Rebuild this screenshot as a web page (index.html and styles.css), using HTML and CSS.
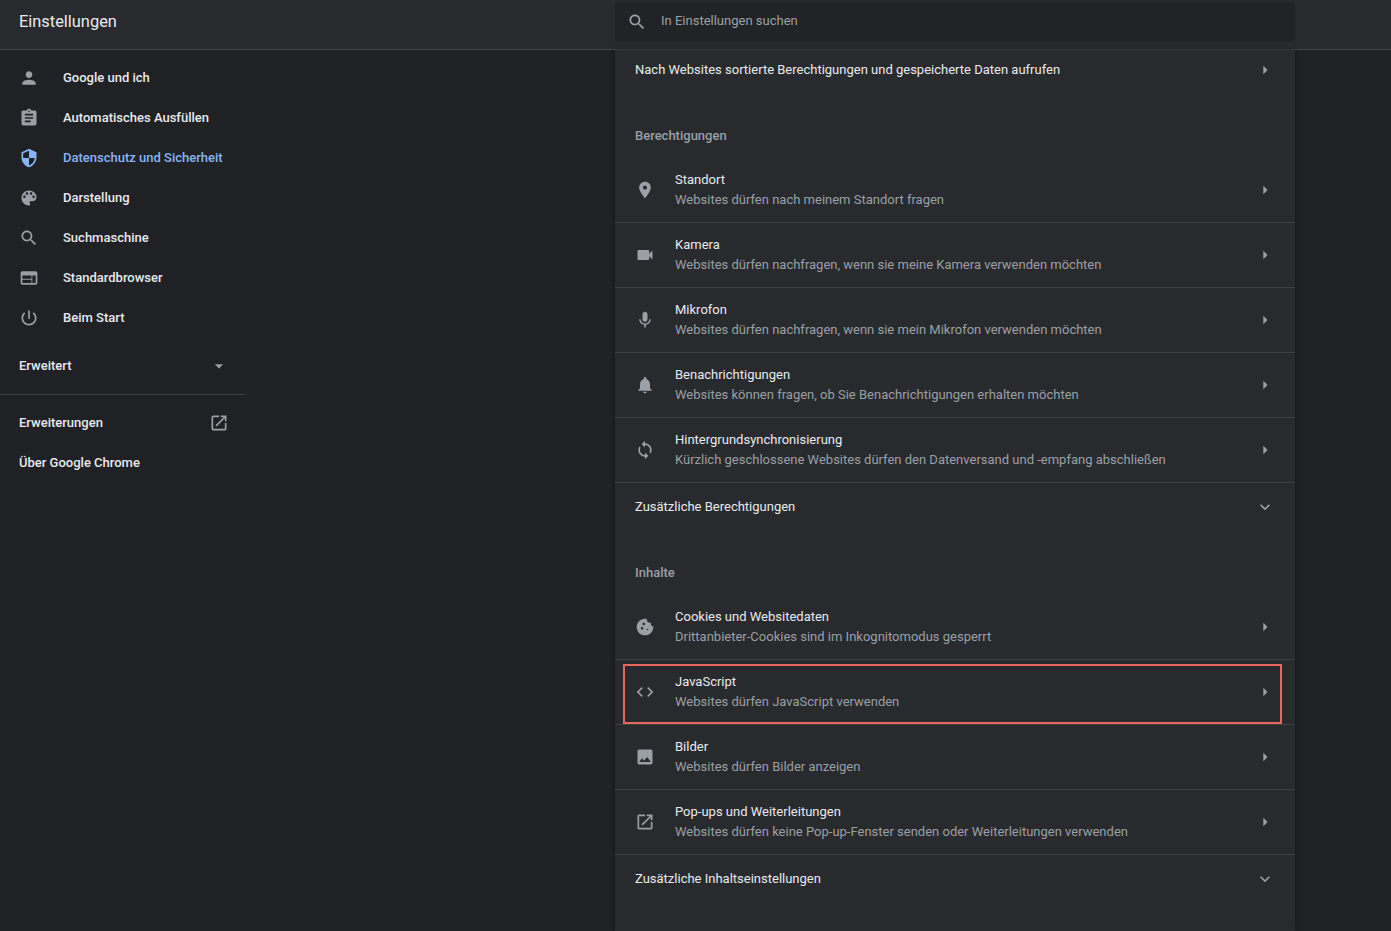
FILE: index.html
```html
<!DOCTYPE html>
<html lang="de">

<head>
  <meta charset="UTF-8">
  <meta name="viewport" content="width=device-width, initial-scale=1.0">
  <title>Einstellungen</title>
  <link rel="stylesheet" href="styles.css">
</head>

<body>
  <svg class="sprite" xmlns="http://www.w3.org/2000/svg">
    <symbol id="i-person" viewBox="0 0 24 24"><path d="M12 12c2.21 0 4-1.79 4-4s-1.79-4-4-4-4 1.79-4 4 1.79 4 4 4zm0 2c-2.67 0-8 1.34-8 4v2h16v-2c0-2.66-5.33-4-8-4z"/></symbol>
    <symbol id="i-assignment" viewBox="0 0 24 24"><path d="M19 3h-4.18C14.4 1.84 13.3 1 12 1c-1.3 0-2.4.84-2.82 2H5c-1.1 0-2 .9-2 2v14c0 1.1.9 2 2 2h14c1.1 0 2-.9 2-2V5c0-1.1-.9-2-2-2zm-7 0c.55 0 1 .45 1 1s-.45 1-1 1-1-.45-1-1 .45-1 1-1zm2 14H7v-2h7v2zm3-4H7v-2h10v2zm0-4H7V7h10v2z"/></symbol>
    <symbol id="i-security" viewBox="0 0 24 24"><path d="M12 1L3 5v6c0 5.55 3.84 10.74 9 12 5.16-1.26 9-6.45 9-12V5l-9-4zm0 10.99h7c-.53 4.12-3.28 7.79-7 8.94V12H5V6.3l7-3.11v8.8z"/></symbol>
    <symbol id="i-palette" viewBox="0 0 24 24"><path d="M12 3c-4.97 0-9 4.03-9 9s4.03 9 9 9c.83 0 1.5-.67 1.5-1.5 0-.39-.15-.74-.39-1.01-.23-.26-.38-.61-.38-.99 0-.83.67-1.5 1.5-1.5H16c2.76 0 5-2.24 5-5 0-4.42-4.03-8-9-8zm-5.5 9c-.83 0-1.5-.67-1.5-1.5S5.67 9 6.5 9 8 9.67 8 10.5 7.33 12 6.5 12zm3-4C8.67 8 8 7.33 8 6.5S8.67 5 9.5 5s1.5.67 1.5 1.5S10.33 8 9.5 8zm5 0c-.83 0-1.5-.67-1.5-1.5S13.67 5 14.5 5s1.5.67 1.5 1.5S15.33 8 14.5 8zm3 4c-.83 0-1.5-.67-1.5-1.5S16.67 9 17.5 9s1.5.67 1.5 1.5-.67 1.5-1.5 1.5z"/></symbol>
    <symbol id="i-search" viewBox="0 0 24 24"><path d="M15.5 14h-.79l-.28-.27C15.41 12.59 16 11.11 16 9.5 16 5.91 13.09 3 9.5 3S3 5.91 3 9.5 5.91 16 9.5 16c1.61 0 3.09-.59 4.23-1.57l.27.28v.79l5 4.99L20.49 19l-4.99-5zm-6 0C7.01 14 5 11.99 5 9.5S7.01 5 9.5 5 14 7.01 14 9.5 11.99 14 9.5 14z"/></symbol>
    <symbol id="i-web" viewBox="0 0 24 24"><path d="M20 4H4c-1.1 0-1.99.9-1.99 2L2 18c0 1.1.9 2 2 2h16c1.1 0 2-.9 2-2V6c0-1.1-.9-2-2-2zm-5 14H4v-4h11v4zm0-5H4V9h11v4zm5 5h-4V9h4v9z"/></symbol>
    <symbol id="i-power" viewBox="0 0 24 24"><path d="M13 3h-2v10h2V3zm4.83 2.17l-1.42 1.42C17.99 7.86 19 9.81 19 12c0 3.87-3.13 7-7 7s-7-3.13-7-7c0-2.19 1.01-4.14 2.58-5.42L6.17 5.17C4.23 6.82 3 9.26 3 12c0 4.97 4.03 9 9 9s9-4.03 9-9c0-2.74-1.23-5.18-3.17-6.83z"/></symbol>
    <symbol id="i-drop" viewBox="0 0 24 24"><path d="M7 10l5 5 5-5z"/></symbol>
    <symbol id="i-open" viewBox="0 0 24 24"><path d="M19 19H5V5h7V3H5c-1.11 0-2 .9-2 2v14c0 1.1.89 2 2 2h14c1.1 0 2-.9 2-2v-7h-2v7zM14 3v2h3.59l-9.83 9.83 1.41 1.41L19 6.41V10h2V3h-7z"/></symbol>
    <symbol id="i-arrow" viewBox="0 0 24 24"><path d="M10 7l5 5-5 5z"/></symbol>
    <symbol id="i-more" viewBox="0 0 24 24"><path d="M16.59 8.59L12 13.17 7.41 8.59 6 10l6 6 6-6z"/></symbol>
    <symbol id="i-pin" viewBox="0 0 24 24"><path d="M12 2C8.13 2 5 5.13 5 9c0 5.25 7 13 7 13s7-7.75 7-13c0-3.87-3.13-7-7-7zm0 9.5c-1.38 0-2.5-1.12-2.5-2.5s1.12-2.5 2.5-2.5 2.5 1.12 2.5 2.5-1.12 2.5-2.5 2.5z"/></symbol>
    <symbol id="i-cam" viewBox="0 0 24 24"><path d="M17 10.5V7c0-.55-.45-1-1-1H4c-.55 0-1 .45-1 1v10c0 .55.45 1 1 1h12c.55 0 1-.45 1-1v-3.5l4 4v-11l-4 4z"/></symbol>
    <symbol id="i-mic" viewBox="0 0 24 24"><path d="M12 14c1.66 0 3-1.34 3-3V5c0-1.66-1.34-3-3-3S9 3.34 9 5v6c0 1.66 1.34 3 3 3zm5.3-3c0 3-2.54 5.1-5.3 5.1S6.7 14 6.7 11H5c0 3.41 2.72 6.23 6 6.72V21h2v-3.28c3.28-.48 6-3.3 6-6.72h-1.7z"/></symbol>
    <symbol id="i-bell" viewBox="0 0 24 24"><path d="M12 22c1.1 0 2-.9 2-2h-4c0 1.1.89 2 2 2zm6-6v-5c0-3.07-1.64-5.64-4.5-6.32V4c0-.83-.67-1.5-1.5-1.5s-1.5.67-1.5 1.5v.68C7.63 5.36 6 7.92 6 11v5l-2 2v1h16v-1l-2-2z"/></symbol>
    <symbol id="i-sync" viewBox="0 0 24 24"><path d="M12 4V1L8 5l4 4V6c3.31 0 6 2.69 6 6 0 1.01-.25 1.97-.7 2.8l1.46 1.46C19.54 15.03 20 13.57 20 12c0-4.42-3.58-8-8-8zm0 14c-3.31 0-6-2.69-6-6 0-1.01.25-1.97.7-2.8L5.24 7.74C4.46 8.97 4 10.43 4 12c0 4.42 3.58 8 8 8v3l4-4-4-4v3z"/></symbol>
    <symbol id="i-cookie" viewBox="0 0 24 24"><path d="M21.95 10.99c-1.79-.03-3.7-1.95-2.68-4.22-2.97 1-5.78-1.59-5.19-4.56C7.1.74 2 6.41 2 12c0 5.52 4.48 10 10 10 5.89 0 10.54-5.08 9.95-11.01zM8.5 15c-.83 0-1.5-.67-1.5-1.5S7.67 12 8.5 12s1.5.67 1.5 1.5S9.33 15 8.5 15zm2-5C9.67 10 9 9.33 9 8.5S9.67 7 10.5 7s1.5.67 1.5 1.5-.67 1.5-1.5 1.5zm4.5 6c-.55 0-1-.45-1-1s.45-1 1-1 1 .45 1 1-.45 1-1 1z"/></symbol>
    <symbol id="i-code" viewBox="0 0 24 24"><path d="M9.4 16.6L4.8 12l4.6-4.6L8 6l-6 6 6 6 1.4-1.4zm5.2 0l4.6-4.6-4.6-4.6L16 6l6 6-6 6-1.4-1.4z"/></symbol>
    <symbol id="i-image" viewBox="0 0 24 24"><path d="M21 19V5c0-1.1-.9-2-2-2H5c-1.1 0-2 .9-2 2v14c0 1.1.9 2 2 2h14c1.1 0 2-.9 2-2zM8.5 13.5l2.5 3.01L14.5 12l4.5 6H5l3.5-4.5z"/></symbol>
  </svg>

  <header class="topbar">
    <h1 class="topbar-title">Einstellungen</h1>
    <div class="search">
      <svg class="icon"><use href="#i-search"/></svg>
      <span class="search-text">In Einstellungen suchen</span>
    </div>
  </header>

  <div class="content">
    <nav class="sidebar">
      <a class="nav-item"><svg class="icon"><use href="#i-person"/></svg>Google und ich</a>
      <a class="nav-item"><svg class="icon"><use href="#i-assignment"/></svg>Automatisches Ausfüllen</a>
      <a class="nav-item active"><svg class="icon"><use href="#i-security"/></svg>Datenschutz und Sicherheit</a>
      <a class="nav-item"><svg class="icon"><use href="#i-palette"/></svg>Darstellung</a>
      <a class="nav-item"><svg class="icon"><use href="#i-search"/></svg>Suchmaschine</a>
      <a class="nav-item"><svg class="icon"><use href="#i-web"/></svg>Standardbrowser</a>
      <a class="nav-item"><svg class="icon"><use href="#i-power"/></svg>Beim Start</a>
      <div class="nav-more">Erweitert<svg class="icon"><use href="#i-drop"/></svg></div>
      <div class="nav-links">
        <a class="nav-more">Erweiterungen<svg class="icon"><use href="#i-open"/></svg></a>
        <a class="nav-more">Über Google Chrome</a>
      </div>
    </nav>

    <main class="panel">
      <div class="row-link first">
        <span>Nach Websites sortierte Berechtigungen und gespeicherte Daten aufrufen</span>
        <svg class="icon"><use href="#i-arrow"/></svg>
      </div>

      <h2 class="section-title">Berechtigungen</h2>
      <div class="row">
        <svg class="icon"><use href="#i-pin"/></svg>
        <div class="row-text">
          <p class="row-name">Standort</p>
          <p class="row-desc">Websites dürfen nach meinem Standort fragen</p>
        </div>
        <svg class="icon"><use href="#i-arrow"/></svg>
      </div>
      <div class="row">
        <svg class="icon"><use href="#i-cam"/></svg>
        <div class="row-text">
          <p class="row-name">Kamera</p>
          <p class="row-desc">Websites dürfen nachfragen, wenn sie meine Kamera verwenden möchten</p>
        </div>
        <svg class="icon"><use href="#i-arrow"/></svg>
      </div>
      <div class="row">
        <svg class="icon"><use href="#i-mic"/></svg>
        <div class="row-text">
          <p class="row-name">Mikrofon</p>
          <p class="row-desc">Websites dürfen nachfragen, wenn sie mein Mikrofon verwenden möchten</p>
        </div>
        <svg class="icon"><use href="#i-arrow"/></svg>
      </div>
      <div class="row">
        <svg class="icon"><use href="#i-bell"/></svg>
        <div class="row-text">
          <p class="row-name">Benachrichtigungen</p>
          <p class="row-desc">Websites können fragen, ob Sie Benachrichtigungen erhalten möchten</p>
        </div>
        <svg class="icon"><use href="#i-arrow"/></svg>
      </div>
      <div class="row">
        <svg class="icon"><use href="#i-sync"/></svg>
        <div class="row-text">
          <p class="row-name">Hintergrundsynchronisierung</p>
          <p class="row-desc">Kürzlich geschlossene Websites dürfen den Datenversand und -empfang abschließen</p>
        </div>
        <svg class="icon"><use href="#i-arrow"/></svg>
      </div>
      <div class="row-link">
        <span>Zusätzliche Berechtigungen</span>
        <svg class="icon"><use href="#i-more"/></svg>
      </div>

      <h2 class="section-title second">Inhalte</h2>
      <div class="row">
        <svg class="icon"><use href="#i-cookie"/></svg>
        <div class="row-text">
          <p class="row-name">Cookies und Websitedaten</p>
          <p class="row-desc">Drittanbieter-Cookies sind im Inkognitomodus gesperrt</p>
        </div>
        <svg class="icon"><use href="#i-arrow"/></svg>
      </div>
      <div class="row marked">
        <svg class="icon"><use href="#i-code"/></svg>
        <div class="row-text">
          <p class="row-name">JavaScript</p>
          <p class="row-desc">Websites dürfen JavaScript verwenden</p>
        </div>
        <svg class="icon"><use href="#i-arrow"/></svg>
        <div class="highlight"></div>
      </div>
      <div class="row">
        <svg class="icon"><use href="#i-image"/></svg>
        <div class="row-text">
          <p class="row-name">Bilder</p>
          <p class="row-desc">Websites dürfen Bilder anzeigen</p>
        </div>
        <svg class="icon"><use href="#i-arrow"/></svg>
      </div>
      <div class="row">
        <svg class="icon"><use href="#i-open"/></svg>
        <div class="row-text">
          <p class="row-name">Pop-ups und Weiterleitungen</p>
          <p class="row-desc">Websites dürfen keine Pop-up-Fenster senden oder Weiterleitungen verwenden</p>
        </div>
        <svg class="icon"><use href="#i-arrow"/></svg>
      </div>
      <div class="row-link">
        <span>Zusätzliche Inhaltseinstellungen</span>
        <svg class="icon"><use href="#i-more"/></svg>
      </div>
    </main>
  </div>
</body>

</html>
```

FILE: styles.css
```css
* {
  box-sizing: border-box;
}

html,
body {
  height: 100%;
}

body {
  margin: 0;
  display: flex;
  flex-direction: column;
  overflow: hidden;
  background-color: #202124;
  color: #e8eaed;
  font: 13px/20px Roboto, "Liberation Sans", sans-serif;
}

.sprite {
  display: none;
}

.icon {
  width: 20px;
  height: 20px;
  flex: none;
  fill: #9aa0a6;
}

/* top bar */
.topbar {
  height: 50px;
  flex: none;
  display: flex;
  background-color: #292a2d;
  border-bottom: 1px solid #45464a;
}

.topbar-title {
  width: 615px;
  margin: 0;
  padding: 12px 0 0 19px;
  font-size: 16.4px;
  font-weight: 400;
}

.search {
  width: 680px;
  height: 40px;
  margin-top: 2px;
  padding-left: 12px;
  display: flex;
  align-items: center;
  gap: 14px;
  background-color: #222326;
  border-radius: 3px;
}

.search-text {
  margin-bottom: 2px;
  color: #9aa0a6;
}

/* page below the bar */
.content {
  flex: 1;
  min-height: 0;
  display: flex;
  gap: 370px;
}

.sidebar {
  width: 245px;
  padding-top: 8px;
  font-weight: 500;
}

.nav-item {
  height: 40px;
  padding-left: 19px;
  display: flex;
  align-items: center;
  gap: 24px;
}

.nav-item.active {
  color: #8ab4f8;
}

.nav-item.active .icon {
  fill: #8ab4f8;
}

.nav-more {
  height: 40px;
  margin-top: 8px;
  padding: 0 16px 0 19px;
  display: flex;
  align-items: center;
  justify-content: space-between;
}

.nav-links {
  margin-top: 8px;
  padding-top: 8px;
  border-top: 1px solid #3f4042;
}

.nav-links .nav-more {
  margin-top: 0;
}

/* settings card */
.panel {
  width: 680px;
  background-color: #292a2d;
  box-shadow: 0 0 4px rgba(0, 0, 0, 0.45);
}

.row-link {
  height: 49px;
  padding: 0 20px;
  display: flex;
  align-items: center;
  justify-content: space-between;
  border-top: 1px solid #3f4042;
}

.row-link.first {
  height: 40px;
  border-top: 0;
}

.section-title {
  margin: 0;
  padding: 36px 20px 12px;
  color: #9aa0a6;
  font-size: 13px;
  font-weight: 500;
}

.section-title.second {
  padding-top: 32px;
}

.row {
  position: relative;
  height: 65px;
  padding: 0 20px;
  display: flex;
  align-items: center;
  gap: 20px;
  border-top: 1px solid #3f4042;
}

.section-title + .row {
  height: 64px;
  border-top: 0;
}

.row-text {
  flex: 1;
}

.row-text p {
  margin: 0;
}

.row-desc {
  color: #9aa0a6;
}

/* red box drawn over the JavaScript row */
.highlight {
  position: absolute;
  top: 4px;
  left: 8px;
  right: 13px;
  height: 60px;
  border: 2px solid #e8685f;
}
```
